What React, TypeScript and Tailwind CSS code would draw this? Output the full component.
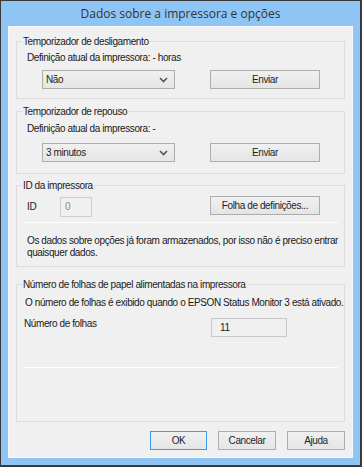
const Chevron = () => (
  <svg width="9" height="6" viewBox="0 0 9 6" className="shrink-0">
    <path d="M1 1 L4.5 4.5 L8 1" fill="none" stroke="#555" strokeWidth="1.6" />
  </svg>
);

const Btn = ({ label, w, primary }: { label: string; w: string; primary?: boolean }) => (
  <div
    className={`${w} h-[19px] flex items-center justify-center whitespace-nowrap border bg-gradient-to-b from-[#f0f0f0] to-[#e5e5e5] text-[#1e1e1e] ${
      primary ? "border-[#3c9af0]" : "border-[#adadad]"
    }`}
  >
    {label}
  </div>
);

const Dropdown = ({ value }: { value: string }) => (
  <div className="w-[133px] h-[19px] flex items-center justify-between pl-[3px] pr-[6px] border border-[#adadad] bg-gradient-to-b from-[#f0f0f0] to-[#e5e5e5] text-[#1e1e1e]">
    <span>{value}</span>
    <Chevron />
  </div>
);

const Group = ({
  title,
  className,
  children,
}: {
  title: string;
  className: string;
  children: React.ReactNode;
}) => (
  <div className={`relative border border-[#dcdcdc] ${className}`}>
    <span className="absolute -top-[7px] left-[5px] bg-[#f0f0f0] px-[1px] leading-[13px]">
      {title}
    </span>
    {children}
  </div>
);

export default function App() {
  return (
    <div
      className="w-[362px] h-[467px] flex flex-col bg-[#8ec5f5] border-l border-t border-r-2 border-b-2 border-[#3a3a3a] text-[10px] leading-[12px] tracking-[-0.4px] text-[#1a1a1a]"
      style={{ fontFamily: "'Liberation Sans', Arial, sans-serif" }}
    >
      <div
        className="h-[25px] flex items-center justify-center text-[12px] tracking-normal text-[#333]"
        style={{ fontFamily: "'Open Sans', 'Noto Sans', sans-serif" }}
      >
        Dados sobre a impressora e opções
      </div>
      <div className="mx-[7px] mb-[7px] flex-1 flex flex-col bg-[#f0f0f0] border border-[#f8f8f8] px-[7px]">
        <Group title="Temporizador de desligamento" className="mt-[14px] h-[58px] pl-[10px]">
          <div className="pt-[10px]">Definição atual da impressora: - horas</div>
          <div className="mt-[6px] ml-[15px] flex gap-[35px]">
            <Dropdown value="Não" />
            <Btn label="Enviar" w="w-[110px]" />
          </div>
        </Group>

        <Group title="Temporizador de repouso" className="mt-[12px] h-[63px] pl-[10px]">
          <div className="pt-[11px]">Definição atual da impressora: -</div>
          <div className="mt-[8px] ml-[15px] flex gap-[35px]">
            <Dropdown value="3 minutos" />
            <Btn label="Enviar" w="w-[110px]" />
          </div>
        </Group>

        <Group title="ID da impressora" className="mt-[11px] h-[82px] pl-[7px] pr-[6px]">
          <div className="mt-[11px] flex items-center">
            <span className="w-[36px] pl-[3px]">ID</span>
            <div className="w-[32px] h-[20px] border border-[#cccccc] bg-[#f0f0f0] text-[#8a8a8a] pl-[4px] flex items-center">
              0
            </div>
            <div className="ml-[118px] -mt-[3px]">
              <Btn label="Folha de definições..." w="w-[110px]" />
            </div>
          </div>
          <div className="mt-[5px] h-[1px] bg-[#a0a0a0] border-b border-white" />
          <div className="mt-[12px] pl-[3px] leading-[12px]">
            Os dados sobre opções já foram armazenados, por isso não é preciso entrar quaisquer dados.
          </div>
        </Group>

        <Group title="Número de folhas de papel alimentadas na impressora" className="mt-[17px] h-[138px] pl-[7px] pr-[6px]">
          <div className="pt-[12px] pl-[1px] whitespace-nowrap">
            O número de folhas é exibido quando o EPSON Status Monitor 3 está ativado.
          </div>
          <div className="mt-[9px] flex items-start">
            <span className="w-[187px]">Número de folhas</span>
            <div className="w-[76px] h-[19px] border border-[#c8c8c8] bg-[#f0f0f0] pl-[8px] flex items-center">
              11
            </div>
          </div>
          <div className="mt-[30px] h-[1px] bg-[#a0a0a0] border-b border-white" />
        </Group>

        <div className="mt-[9px] flex justify-end gap-[11px]">
          <Btn label="OK" w="w-[57px]" primary />
          <Btn label="Cancelar" w="w-[58px]" />
          <Btn label="Ajuda" w="w-[58px]" />
        </div>
      </div>
    </div>
  );
}
